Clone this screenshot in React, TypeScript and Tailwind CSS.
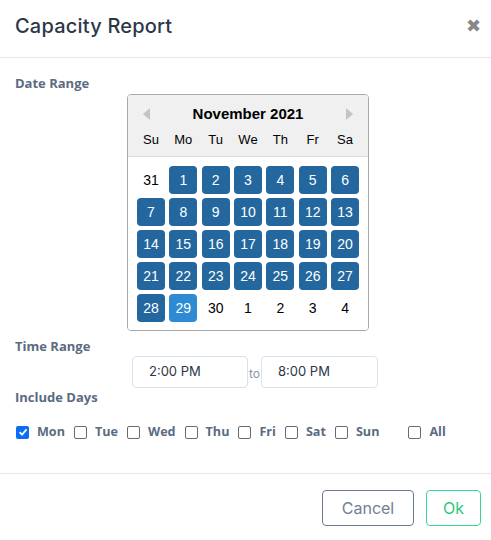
import React from "react";

const weeks: { d: number; kind: "out" | "in" | "today" }[][] = (() => {
  const cells: { d: number; kind: "out" | "in" | "today" }[] = [];
  cells.push({ d: 31, kind: "out" });
  for (let i = 1; i <= 30; i++) {
    if (i === 30) cells.push({ d: 30, kind: "out" });
    else cells.push({ d: i, kind: i === 29 ? "today" : "in" });
  }
  for (let i = 1; i <= 4; i++) cells.push({ d: i, kind: "out" });
  const w = [];
  for (let i = 0; i < 5; i++) w.push(cells.slice(i * 7, i * 7 + 7));
  return w;
})();

const days = [
  { l: "Mon", c: true },
  { l: "Tue", c: false },
  { l: "Wed", c: false },
  { l: "Thu", c: false },
  { l: "Fri", c: false },
  { l: "Sat", c: false },
  { l: "Sun", c: false },
];

function Box({ checked }: { checked: boolean }) {
  if (checked)
    return (
      <span className="inline-flex h-[13px] w-[13px] items-center justify-center rounded-[2px] bg-[#0b6cf5]">
        <svg width="10" height="10" viewBox="0 0 10 10">
          <path d="M1.6 5.2 L4 7.6 L8.6 2.4" fill="none" stroke="#fff" strokeWidth="1.8" />
        </svg>
      </span>
    );
  return <span className="inline-block h-[13px] w-[13px] rounded-[2px] border border-[#6b6b6b] bg-white" />;
}

export default function App() {
  const label = "text-[13px] font-bold text-[#5b6b82] leading-[18px]";
  const dayLabel = "text-[12.6px] font-bold text-[#5b6b82] leading-[18px]";
  return (
    <div className="w-[491px] h-[540px] bg-white flex flex-col" style={{ fontFamily: "'Open Sans', sans-serif" }}>
      <div className="h-[58px] border-b border-[#e2e8f0] flex items-center justify-between pl-[15px] pr-[10px] pb-[5px]">
        <div className="text-[20px] font-medium text-[#2d3748] tracking-[0.2px]" style={{ fontFamily: "Inter, sans-serif" }}>
          Capacity Report
        </div>
        <span className="text-[#888] text-[18px] font-bold leading-none" style={{ fontFamily: "'DejaVu Sans', sans-serif" }}>✖</span>
      </div>
      <div className="px-[15px] pt-[16px] flex flex-col">
        <div className={label}>Date Range</div>
        <div
          className="ml-[112px] mt-[2px] w-[242px] rounded-[4px] border border-[#aaaaaa] overflow-hidden"
          style={{ fontFamily: "'Liberation Sans', Arial, sans-serif" }}
        >
          <div className="bg-[#f0f0f0] h-[62px] border-b border-[#dddddd] flex flex-col">
            <div className="h-[36px] flex items-center justify-between px-[15px] pt-[2px]">
              <svg width="8" height="12" viewBox="0 0 8 12"><path d="M7 0 L0 6 L7 12 Z" fill="#c4c4c4" /></svg>
              <span className="text-[15px] font-bold text-black">November 2021</span>
              <svg width="8" height="12" viewBox="0 0 8 12"><path d="M1 0 L8 6 L1 12 Z" fill="#c4c4c4" /></svg>
            </div>
            <div className="grid grid-cols-7 gap-x-[4.4px] px-[9px] text-[13px] text-black">
              {["Su", "Mo", "Tu", "We", "Th", "Fr", "Sa"].map((d) => (
                <div key={d} className="text-center leading-[18px]">{d}</div>
              ))}
            </div>
          </div>
          <div className="grid grid-cols-7 gap-x-[4.4px] gap-y-[4px] px-[9px] pt-[9px] pb-[8px] bg-white">
            {weeks.flat().map((c, i) => (
              <div
                key={i}
                className={
                  "h-[28px] w-[28px] flex items-center justify-center rounded-[4px] text-[14px] " +
                  (c.kind === "in"
                    ? "bg-[#23679e] text-white"
                    : c.kind === "today"
                    ? "bg-[#2e8bd3] text-white"
                    : "text-black")
                }
              >
                {c.d}
              </div>
            ))}
          </div>
        </div>
        <div className={label + " mt-[6px]"}>Time Range</div>
        <div className="flex items-center ml-[117px] mt-[1px]" style={{ fontFamily: "Inter, sans-serif" }}>
          <div className="w-[116px] h-[32px] border border-[#d6e2ee] rounded-[4px] flex items-center pl-[16px] text-[13px] text-[#2d3748]">2:00 PM</div>
          <span className="text-[12px] text-[#8a94a6] mx-[1px] mt-[4px]">to</span>
          <div className="w-[117px] h-[32px] border border-[#d6e2ee] rounded-[4px] flex items-center pl-[16px] text-[13px] text-[#2d3748]">8:00 PM</div>
        </div>
        <div className={label}>Include Days</div>
        <div className="flex items-center mt-[17px] pl-[1px]">
          {days.map((d) => (
            <div key={d.l} className="flex items-center mr-[9px]">
              <Box checked={d.c} />
              <span className={dayLabel + " ml-[8px]"}>{d.l}</span>
            </div>
          ))}
          <div className="flex items-center ml-[20px]">
            <Box checked={false} />
            <span className={dayLabel + " ml-[8px]"}>All</span>
          </div>
        </div>
      </div>
      <div className="mt-auto border-t border-[#e2e8f0] h-[67px] flex items-start justify-end gap-[12px] pr-[10px] pt-[16px]" style={{ fontFamily: "Inter, sans-serif" }}>
        <button className="w-[92px] h-[36px] rounded-[4px] border border-[#6b7a90] text-[#718096] text-[16px]">Cancel</button>
        <button className="w-[55px] h-[36px] rounded-[4px] border border-[#3bd68f] text-[#2fc77a] text-[16px]">Ok</button>
      </div>
    </div>
  );
}
